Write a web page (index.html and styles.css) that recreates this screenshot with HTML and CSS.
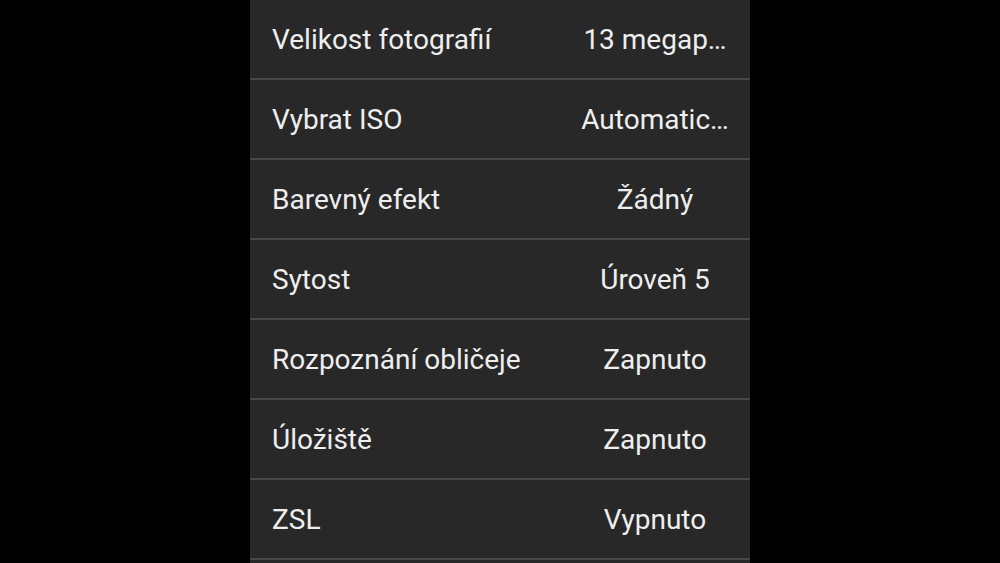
FILE: index.html
```html
<!DOCTYPE html>
<html>
<head>
<title>Nastavení fotoaparátu</title>
<link rel="stylesheet" href="styles.css">
</head>
<body>

<!-- Settings list -->
<div class="panel">
    <div class="row"><span class="label">Velikost fotografií</span><span class="value">13 megap…</span></div>
    <div class="row"><span class="label">Vybrat ISO</span><span class="value">Automatic…</span></div>
    <div class="row"><span class="label">Barevný efekt</span><span class="value">Žádný</span></div>
    <div class="row"><span class="label">Sytost</span><span class="value">Úroveň 5</span></div>
    <div class="row"><span class="label">Rozpoznání obličeje</span><span class="value">Zapnuto</span></div>
    <div class="row"><span class="label">Úložiště</span><span class="value">Zapnuto</span></div>
    <div class="row"><span class="label">ZSL</span><span class="value">Vypnuto</span></div>
</div>

</body>
</html>
```

FILE: styles.css
```css
html, body {
    margin: 0;
    height: 100%;
    overflow: hidden;
}

body {
    background-color: #000000;
    font-family: Roboto, "Noto Sans", sans-serif;
    color: #eeeeee;
}

.panel {
    width: 500px;
    height: 100%;
    margin: 0 auto;
    background-color: #282828;
}

.row {
    display: flex;
    align-items: center;
    height: 78px;
    border-bottom: 2px solid #474747;
    padding-left: 22px;
    font-size: 28px;
}

.label {
    flex: 1;
    white-space: nowrap;
}

.value {
    width: 150px;
    margin-right: 20px;
    text-align: center;
    white-space: nowrap;
}
```
